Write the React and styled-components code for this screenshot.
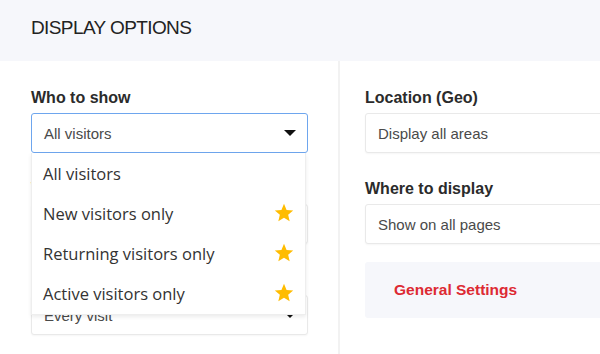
import React from 'react'
import styled, { createGlobalStyle } from 'styled-components'

const GlobalStyle = createGlobalStyle`
  html, body {
    margin: 0;
    padding: 0;
    background: #ffffff;
    overflow: hidden;
  }
  * { box-sizing: border-box; }
`

const visitorOptions = [
  { label: 'All visitors', pro: false },
  { label: 'New visitors only', pro: true },
  { label: 'Returning visitors only', pro: true },
  { label: 'Active visitors only', pro: true },
]

const Star = () => (
  <StarIcon viewBox="0 0 24 24" width="22" height="22">
    <path d="M12 17.27L18.18 21l-1.64-7.03L22 9.24l-7.19-.61L12 2 9.19 8.63 2 9.24l5.46 4.73L5.82 21z" />
  </StarIcon>
)

const Field = ({ label, value, open, children }) => (
  <FieldBox>
    <Label>{label}</Label>
    <SelectWrap>
      <Select $open={open}>
        <SelectText>{value}</SelectText>
        <Caret />
      </Select>
      {children}
    </SelectWrap>
  </FieldBox>
)

const App = () => {
  return (
    <>
      <GlobalStyle />
      <Page>
        <Header>
          <Title>DISPLAY OPTIONS</Title>
        </Header>
        <Body>
          <LeftCol>
            <Field label="Who to show" value="All visitors" open>
              <Menu>
                {visitorOptions.map((o) => (
                  <MenuItem key={o.label}>
                    <span>{o.label}</span>
                    {o.pro && <Star />}
                  </MenuItem>
                ))}
              </Menu>
            </Field>
            <Field label="When to show" value="After 5 seconds" />
            <Field label="How often" value="Every visit" />
          </LeftCol>
          <Divider />
          <RightCol>
            <Field label="Location (Geo)" value="Display all areas" />
            <Field label="Where to display" value="Show on all pages" />
            <SettingsPanel>
              <SettingsLink>General Settings</SettingsLink>
            </SettingsPanel>
          </RightCol>
        </Body>
      </Page>
    </>
  )
}

export default App

const Page = styled.div`
  width: 760px;
  min-height: 100vh;
  display: flex;
  flex-direction: column;
  font-family: "Liberation Sans", Arial, sans-serif;
`
const Header = styled.div`
  height: 61px;
  background: #f6f7fb;
  padding: 16px 0 0 31px;
`
const Title = styled.h1`
  margin: 0;
  font-size: 19px;
  line-height: 24px;
  font-weight: 400;
  letter-spacing: -0.6px;
  color: #222;
`
const Body = styled.div`
  flex: 1;
  display: grid;
  grid-template-columns: 338px 2px 1fr;
`
const LeftCol = styled.div`
  padding: 27px 30px 0 31px;
`
const Divider = styled.div`
  background: #f2f2f2;
`
const RightCol = styled.div`
  padding: 27px 0 0 25px;
  width: 380px;
`
const FieldBox = styled.div`
  margin-bottom: 26px;
`
const Label = styled.div`
  font-size: 16px;
  line-height: 20px;
  font-weight: 700;
  color: #2b2b2b;
  margin-bottom: 5px;
`
const SelectWrap = styled.div`
  position: relative;
`
const Select = styled.div`
  height: 40px;
  display: flex;
  align-items: center;
  justify-content: space-between;
  padding: 0 11px 0 12px;
  border: 1px solid ${(p) => (p.$open ? '#6ea6ee' : '#e9e9e9')};
  border-radius: 3px;
  background: #fff;
  box-shadow: ${(p) => (p.$open ? 'none' : '0 1px 2px rgba(0,0,0,0.04)')};
`
const SelectText = styled.span`
  font-size: 15px;
  color: #4a4a4a;
`
const Caret = styled.span`
  width: 0;
  height: 0;
  border-left: 6px solid transparent;
  border-right: 6px solid transparent;
  border-top: 6px solid #111;
`
const Menu = styled.div`
  position: absolute;
  top: 100%;
  left: 0;
  right: 2px;
  z-index: 10;
  padding-bottom: 1px;
  background: #fff;
  border: 1px solid #eeeeee;
  border-top: none;
  box-shadow: 0 2px 4px rgba(0, 0, 0, 0.08);
`
const MenuItem = styled.div`
  height: 40px;
  display: flex;
  align-items: center;
  justify-content: space-between;
  padding: 0 10px 0 11px;
  font-family: "Open Sans", "Liberation Sans", sans-serif;
  font-size: 16.5px;
  color: #333;
`
const StarIcon = styled.svg`
  fill: #ffbc00;
  display: block;
`
const SettingsPanel = styled.div`
  height: 56px;
  margin-top: -8px;
  background: #f6f7fb;
  border-radius: 3px;
  display: flex;
  align-items: center;
  padding-left: 29px;
`
const SettingsLink = styled.span`
  font-size: 15.5px;
  font-weight: 700;
  color: #dd2a33;
`
